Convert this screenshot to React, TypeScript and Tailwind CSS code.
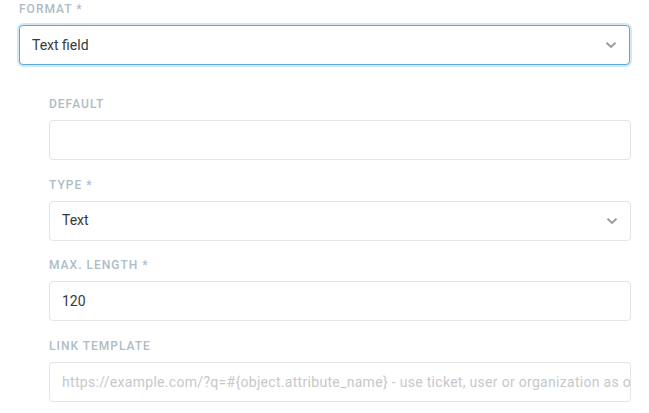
import React from 'react';

const Chevron: React.FC = () => (
  <svg width="12" height="8" viewBox="0 0 12 8" className="shrink-0">
    <path d="M1.5 1.8 L6 6 L10.5 1.8" fill="none" stroke="#9b9b9b" strokeWidth="2" />
  </svg>
);

const Label: React.FC<{ text: string }> = ({ text }) => (
  <div className="h-4 mb-2 text-[12px] leading-4 tracking-[1px] uppercase text-[#aebcc6] font-medium">{text}</div>
);

const Input: React.FC<{ value?: string; placeholder?: string }> = ({ value, placeholder }) => (
  <div className="h-10 flex items-center px-3 border border-[#e4e4e4] rounded bg-white text-[14px] overflow-hidden whitespace-nowrap">
    {value ? (
      <span className="text-[#38393a]">{value}</span>
    ) : (
      <span className="text-[#c6c8ca] tracking-[0.3px]">{placeholder}</span>
    )}
  </div>
);

const Select: React.FC<{ value: string; focused?: boolean }> = ({ value, focused }) => (
  <div
    className={
      focused
        ? 'h-10 flex items-center justify-between px-3 border border-[#58a9dc] rounded shadow-[0_0_0_2px_#d3e7f5] bg-white text-[14px]'
        : 'h-10 flex items-center justify-between px-3 border border-[#e4e4e4] rounded bg-white text-[14px]'
    }
  >
    <span className="text-[#38393a]">{value}</span>
    <Chevron />
  </div>
);

export default function App() {
  return (
    <div className="w-[649px] h-[413px] bg-white overflow-hidden pt-[1px] px-[19px]" style={{ fontFamily: 'Roboto, "Open Sans", sans-serif' }}>
      <Label text="Format *" />
      <Select value="Text field" focused />
      <div className="ml-[30px] mr-[-1px] mt-[31px] flex flex-col gap-[16.7px]">
        <div>
          <Label text="Default" />
          <Input value="" placeholder="" />
        </div>
        <div>
          <Label text="Type *" />
          <Select value="Text" />
        </div>
        <div>
          <Label text="Max. Length *" />
          <Input value="120" />
        </div>
        <div>
          <Label text="Link Template" />
          <Input placeholder="https://example.com/?q=#{object.attribute_name} - use ticket, user or organization as object" />
        </div>
      </div>
    </div>
  );
}
